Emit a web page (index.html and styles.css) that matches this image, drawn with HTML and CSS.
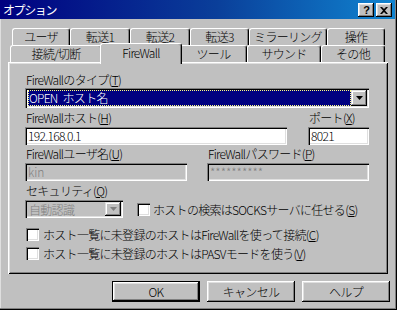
FILE: index.html
```html
<!DOCTYPE html>
<html lang="ja">
<head>
<meta charset="utf-8">
<title>オプション</title>
<link rel="stylesheet" href="styles.css">
</head>
<body>
<div class="window">
  <div class="titlebar">
    <span class="title">オプション</span>
    <div class="tbtns">
      <span class="tbtn q">?</span>
      <span class="tbtn">
        <svg width="8" height="7" viewBox="0 0 8 7"><path d="M0 0h2l2 2 2-2h2L5 3.5 8 7H6L4 5 2 7H0l3-3.5z" fill="#000"/></svg>
      </span>
    </div>
  </div>

  <div class="tabrow back">
    <div class="tab t-user">ユーザ</div>
    <div class="tab t-x1">転送1</div>
    <div class="tab t-x2">転送2</div>
    <div class="tab t-x3">転送3</div>
    <div class="tab t-mir">ミラーリング</div>
    <div class="tab t-op">操作</div>
  </div>
  <div class="tabrow front">
    <div class="tab t-conn">接続/切断</div>
    <div class="tab t-fw sel">FireWall</div>
    <div class="tab t-tool">ツール</div>
    <div class="tab t-snd">サウンド</div>
    <div class="tab t-etc">その他</div>
  </div>

  <div class="panel">
    <div class="lbl">FireWallのタイプ(<u>T</u>)</div>
    <div class="combo wide">
      <div class="combo-val"><span class="hl">OPEN ホスト名</span></div>
      <span class="ddbtn"><svg width="7" height="4" viewBox="0 0 7 4"><path d="M0 0h7L3.5 4z" fill="#000"/></svg></span>
    </div>

    <div class="grid host">
      <div>
        <div class="lbl">FireWallホスト(<u>H</u>)</div>
        <div class="edit">192.168.0.1</div>
      </div>
      <div>
        <div class="lbl">ポート(<u>X</u>)</div>
        <div class="edit">8021</div>
      </div>
    </div>

    <div class="grid user">
      <div>
        <div class="lbl">FireWallユーザ名(<u>U</u>)</div>
        <div class="edit dis">kin</div>
      </div>
      <div>
        <div class="lbl">FireWallパスワード(<u>P</u>)</div>
        <div class="edit dis">**********</div>
      </div>
    </div>

    <div class="lbl sec">セキュリティ(<u>Q</u>)</div>
    <div class="secrow">
      <div class="combo small dis">
        <div class="combo-val">自動認識</div>
        <span class="ddbtn"><svg width="7" height="4" viewBox="0 0 7 4"><path d="M0 0h7L3.5 4z" fill="#808080"/></svg></span>
      </div>
      <label class="chk first"><span class="box"></span>ホストの検索はSOCKSサーバに任せる(<u>S</u>)</label>
    </div>

    <label class="chk row1"><span class="box"></span>ホスト一覧に未登録のホストはFireWallを使って接続(<u>C</u>)</label>
    <label class="chk row2"><span class="box"></span>ホスト一覧に未登録のホストはPASVモードを使う(<u>V</u>)</label>
  </div>

  <div class="buttons">
    <div class="btn def">OK</div>
    <div class="btn">キャンセル</div>
    <div class="btn">ヘルプ</div>
  </div>
</div>
</body>
</html>
```

FILE: styles.css
```css
html, body {
  margin: 0;
  padding: 0;
  background: #c0c0c0;
}
body {
  font-family: "Noto Sans CJK JP", "Liberation Sans", sans-serif;
  font-size: 12px;
  font-weight: 300;
  letter-spacing: -0.7px;
  word-spacing: 2px;
  color: #000;
}
u { text-decoration: underline; text-underline-offset: 1px; }

.window {
  width: 397px;
  height: 310px;
  box-sizing: border-box;
  background: #c0c0c0;
  box-shadow: inset -1px -1px #000, inset -2px -2px #808080, inset 1px 0 #dfdfdf;
  overflow: hidden;
}

.titlebar {
  height: 19px;
  width: 395px;
  background: linear-gradient(90deg, #000080 0%, #0a3f9a 55%, #1084d0 100%);
  display: flex;
  align-items: flex-start;
  justify-content: space-between;
  padding: 0 3px 0 3px;
  box-sizing: border-box;
}
.title {
  color: #fff;
  font-weight: 400;
  font-size: 12px;
  line-height: 19px;
  letter-spacing: -1.4px;
}
.tbtns {
  display: flex;
  gap: 2px;
  margin-top: 3px;
}
.tbtn {
  width: 16px;
  height: 14px;
  box-sizing: border-box;
  background: #c0c0c0;
  box-shadow: inset -1px -1px #000, inset 1px 1px #fff, inset -2px -2px #808080, inset 2px 2px #dfdfdf;
  display: flex;
  align-items: center;
  justify-content: center;
}
.tbtn.q {
  font-family: "Liberation Sans", sans-serif;
  font-weight: bold;
  font-size: 11px;
  letter-spacing: 0;
  line-height: 14px;
  padding-left: 1px;
}

/* tabs */
.tabrow {
  display: flex;
  height: 17px;
  position: relative;
}
.tabrow.back { margin: 9px 0 0 12px; }
.tabrow.front { margin-left: 10px; z-index: 2; }
.tab {
  box-sizing: border-box;
  height: 17px;
  background: #c0c0c0;
  border-top: 1px solid #fff;
  border-left: 1px solid #fff;
  border-right: 1px solid #000;
  box-shadow: inset -1px 0 #808080;
  border-radius: 3px 3px 0 0;
  text-align: center;
  line-height: 16px;
  white-space: nowrap;
}
.t-user { width: 58px; }
.t-x1 { width: 60px; }
.t-x2 { width: 60px; }
.t-x3 { width: 59px; }
.t-mir { width: 78px; }
.t-op { width: 58px; }
.t-conn { width: 92px; }
.t-fw { width: 78px; }
.t-tool { width: 67px; }
.t-snd { width: 74px; }
.t-etc { width: 64px; }
.tab.sel {
  position: relative;
  z-index: 3;
  width: 82px;
  height: 21px;
  margin: -2px -2px 0 -2px;
  line-height: 17px;
}

/* panel */
.panel {
  position: relative;
  z-index: 1;
  margin-left: 8px;
  width: 380px;
  height: 212px;
  box-sizing: border-box;
  padding: 11px 0 0 17px;
  box-shadow: inset 1px 1px #fff, inset -1px -1px #000, inset 2px 2px #dfdfdf, inset -2px -2px #808080;
}
.lbl {
  height: 14px;
  line-height: 14px;
  padding-left: 1px;
  white-space: nowrap;
}

.edit, .combo {
  box-sizing: border-box;
  background: #fff;
  box-shadow: inset 1px 1px #808080, inset 2px 2px #000, inset -1px -1px #fff, inset -2px -2px #dfdfdf;
  height: 18px;
  line-height: 16px;
  padding: 1px 3px 0 3px;
  white-space: nowrap;
  overflow: hidden;
}
.edit.dis, .combo.dis {
  background: #c0c0c0;
  color: #808080;
}
.edit.dis { letter-spacing: 0; }

.combo {
  position: relative;
  display: flex;
  align-items: center;
  padding: 2px 2px 2px 2px;
}
.combo.wide {
  width: 344px;
  height: 20px;
  margin-top: 1px;
}
.combo-val {
  flex: 1;
  height: 100%;
  line-height: 15px;
  padding-left: 1px;
  display: flex;
}
.hl {
  flex: 1;
  background: #000080;
  color: #fff;
  outline: 1px dotted #ffff80;
  outline-offset: -1px;
  padding-left: 1px;
  line-height: 15px;
  word-spacing: 3px;
}
.ddbtn {
  width: 16px;
  height: 100%;
  box-sizing: border-box;
  background: #c0c0c0;
  box-shadow: inset -1px -1px #000, inset 1px 1px #dfdfdf, inset -2px -2px #808080, inset 2px 2px #fff;
  display: flex;
  align-items: center;
  justify-content: center;
}

.grid { display: grid; }
.grid .lbl { margin-top: 3px; }
.grid .edit { margin-top: 2px; }
.grid.host { grid-template-columns: 262px 61px; column-gap: 21px; }
.grid.user { grid-template-columns: 162px 162px; column-gap: 20px; }
.grid.user .lbl { margin-top: 2px; }

.lbl.sec { margin-top: 3px; }
.secrow {
  display: flex;
  align-items: center;
  margin-top: 2px;
}
.combo.small {
  width: 98px;
  height: 18px;
  padding-left: 3px;
}

.chk {
  display: flex;
  align-items: center;
  height: 13px;
  line-height: 13px;
  white-space: nowrap;
}
.box {
  width: 13px;
  height: 13px;
  box-sizing: border-box;
  background: #fff;
  box-shadow: inset 1px 1px #808080, inset 2px 2px #000, inset -1px -1px #fff, inset -2px -2px #dfdfdf;
  margin-right: 4px;
  flex: none;
}
.chk.first { margin-left: 14px; }
.chk.first .box { margin-right: 3px; }
.chk.row1 { margin-top: 10px; margin-left: 1px; }
.chk.row2 { margin-top: 6px; margin-left: 1px; }

/* buttons */
.buttons {
  display: flex;
  justify-content: flex-end;
  gap: 7px;
  margin-top: 7px;
  padding-right: 7px;
}
.btn {
  width: 88px;
  height: 21px;
  box-sizing: border-box;
  text-align: center;
  line-height: 21px;
  box-shadow: inset -1px -1px #000, inset 1px 1px #fff, inset -2px -2px #808080, inset 2px 2px #dfdfdf;
}
.btn.def {
  box-shadow: inset 0 0 0 1px #000, inset -2px -2px #000, inset 2px 2px #fff, inset -3px -3px #808080, inset 3px 3px #dfdfdf;
}
```
